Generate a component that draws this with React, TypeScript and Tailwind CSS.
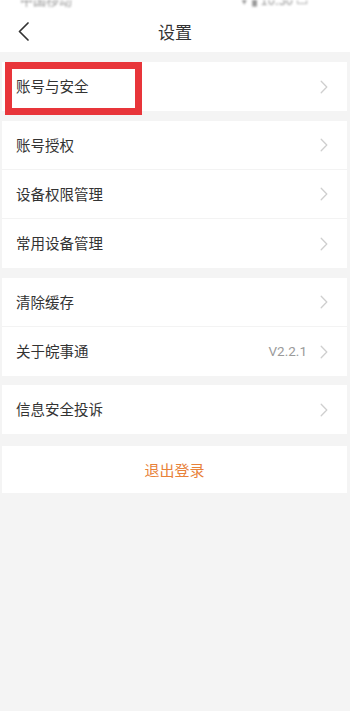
import React from "react";

const Chevron = () => (
  <svg width="8" height="14" viewBox="0 0 8 14" fill="none" className="shrink-0">
    <path d="M1.2 1.2L6.8 7L1.2 12.8" stroke="#cfcfcf" strokeWidth="1.3" strokeLinecap="round" strokeLinejoin="round" />
  </svg>
);

const Row = ({ label, value, divider }: { label: string; value?: string; divider?: boolean }) => (
  <div className={`flex h-[49px] items-center pl-[14px] pr-[19px] ${divider ? "border-b border-[#f3f3f3]" : ""}`}>
    <span className="flex-1 text-[14.5px] leading-none text-[#333333]">{label}</span>
    {value && <span className="mr-[13px] text-[13.5px] leading-none text-[#9a9a9a]" style={{ fontFamily: "Roboto, 'Noto Sans', sans-serif" }}>{value}</span>}
    <Chevron />
  </div>
);

export default function App() {
  return (
    <div
      className="w-[350px] min-h-[711px] bg-[#f4f4f4] flex flex-col"
      style={{ fontFamily: "'Noto Sans CJK SC', 'Noto Sans', sans-serif" }}
    >
      <div className="bg-white">
        <div className="h-[10px] overflow-hidden flex justify-between px-[20px] opacity-50 blur-[1px]">
          <span className="text-[13px] leading-[13px] -mt-[7px] text-[#333]">中国移动</span>
          <span className="text-[13px] leading-[13px] -mt-[7px] text-[#333] mr-[22px]">▾ ▮ 10:30 ▭</span>
        </div>
        <div className="grid grid-cols-[1fr_auto_1fr] h-[42px] items-center">
          <div className="pl-[18px] flex items-center">
            <svg width="11" height="19" viewBox="0 0 11 19" fill="none">
              <path d="M10 1L1.5 9.5L10 18" stroke="#333333" strokeWidth="1.7" strokeLinecap="round" strokeLinejoin="round" />
            </svg>
          </div>
          <span className="text-[17px] leading-none text-[#333333]">设置</span>
          <div />
        </div>
      </div>

      <div className="mt-[10px] ml-[2px] mr-[3px] bg-white relative">
        <Row label="账号与安全" />
        <div className="absolute left-[3px] top-0 w-[137px] h-[53px] border-[7px] border-[#e8353a] pointer-events-none" />
      </div>

      <div className="mt-[10px] ml-[2px] mr-[3px] bg-white">
        <Row label="账号授权" divider />
        <Row label="设备权限管理" divider />
        <Row label="常用设备管理" />
      </div>

      <div className="mt-[10px] ml-[2px] mr-[3px] bg-white">
        <Row label="清除缓存" divider />
        <Row label="关于皖事通" value="V2.2.1" />
      </div>

      <div className="mt-[9px] ml-[2px] mr-[3px] bg-white">
        <Row label="信息安全投诉" />
      </div>

      <div className="mt-[12px] ml-[2px] mr-[3px] bg-white h-[47px] flex items-center justify-center">
        <span className="text-[15px] leading-none text-[#e8823a]">退出登录</span>
      </div>
    </div>
  );
}
